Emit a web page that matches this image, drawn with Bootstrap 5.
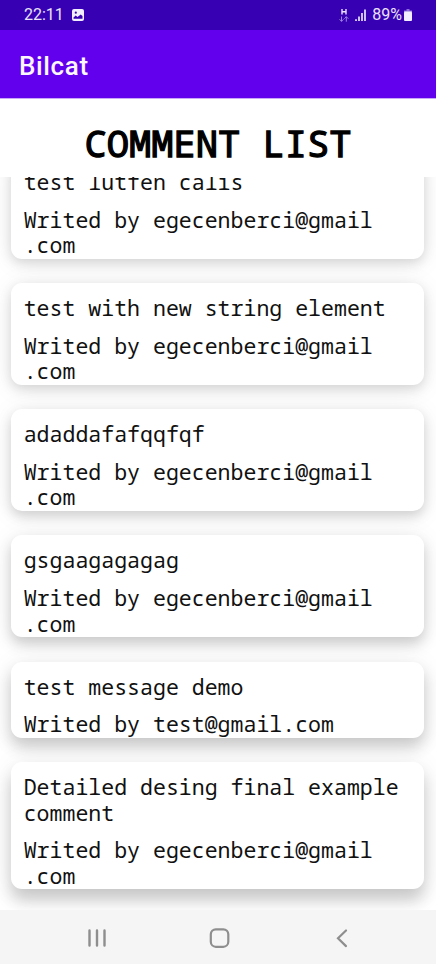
<!DOCTYPE html>
<html lang="en">
<head>
<meta charset="utf-8">
<meta name="viewport" content="width=device-width, initial-scale=1">
<title>Bilcat</title>
<link href="https://cdn.jsdelivr.net/npm/bootstrap@5.3.0/dist/css/bootstrap.min.css" rel="stylesheet">
<style>
  body { height: 964px; font-family: Roboto, sans-serif; color: #000; }
  .status { height: 30px; background: #3700b3; color: #e9e2fa; font-size: 16px; padding: 0 24px 0 24px; line-height: 28px; }
  .status .charge { margin-left: 2px; }
  .appbar { height: 69px; background: #6200ee; padding: 5px 19px 0; border-bottom: 1px solid #c9a8f7; }
  .appbar h1 { font-size: 26px; font-weight: 500; color: #fbf6ff; letter-spacing: .65px; }
  .mono { font-family: "Droid Sans Mono", "Noto Sans Mono", "DejaVu Sans Mono", monospace; }
  .heading { height: 78px; }
  .heading h2 { font-size: 37.1px; font-weight: 400; -webkit-text-stroke: 1.3px #000; line-height: 44px; padding-top: 22px; }
  .feed { padding: 0 12px 0 11px; }
  .stack { gap: 24.2px; margin-top: -19.8px; }
  .note { border: 0; border-radius: 11px; padding: 12px 11px 1.6px 12.7px; font-size: 21.55px; line-height: 25.2px; color: #111; }
  .note p + p { margin-top: 12.7px; }
  .note p { margin-bottom: 0; }
  .lift-1 { box-shadow: 0 4px 12px rgba(0,0,0,.13), 0 3px 26px rgba(0,0,0,.08); }
  .lift-2 { box-shadow: 0 5px 12px rgba(0,0,0,.15), 0 3px 26px rgba(0,0,0,.08); }
  .lift-3 { box-shadow: 0 7px 13px rgba(0,0,0,.17), 0 3px 26px rgba(0,0,0,.08); }
  .lift-4 { box-shadow: 0 9px 15px rgba(0,0,0,.18), 0 3px 26px rgba(0,0,0,.08); }
  .lift-5 { box-shadow: 0 12px 16px rgba(0,0,0,.18), 0 3px 26px rgba(0,0,0,.08); }
  .softkeys { height: 54px; background: #f5f5f5; }
  .softkeys svg { display: block; }
</style>
</head>
<body class="d-flex flex-column overflow-hidden bg-white">
  <div class="status d-flex align-items-center flex-shrink-0">
    <span>22:11</span>
    <svg class="ms-2" width="12" height="12" viewBox="0 0 12 12"><rect width="12" height="12" rx="2" fill="#f2edff"/><circle cx="3.8" cy="3.7" r="1.1" fill="#3700b3"/><path d="M1.500 9.800V8.500l2.200-2 1.800 1.600 3.200-2.600 1.800 1.500v2.800z" fill="#3700b3"/></svg>
    <svg class="ms-auto" width="10" height="13" viewBox="0 0 10 13" fill="none"><path d="M3 0v5.500M7 0v5.500M3 2.700H7" stroke="#e9e2fa" stroke-width="1.400"/><path d="M2.500 7.500v5M.5 10.300l2 2 2-2M7.300 12.700V7.700M5.300 9.700l2-2 2 2" stroke="#9d80e0" stroke-width="1"/></svg>
    <svg class="ms-1 me-1" width="15" height="12" viewBox="0 0 15 12" stroke="#e9e2fa" stroke-width="1.700"><path d="M3 12V10.300M6 12V7.500M9 12V4M12 12V.5"/></svg>
    <span>89%</span>
    <svg class="charge" width="8" height="12" viewBox="0 0 8 12"><path d="M2.500 0h3v1.500H8V3H0V1.500h2.500z" fill="#8f6edb"/><rect y="2.500" width="8" height="9.500" rx="1" fill="#f2edff"/></svg>
  </div>
  <nav class="appbar d-flex align-items-center flex-shrink-0"><h1 class="mb-0">Bilcat</h1></nav>
  <header class="heading text-center flex-shrink-0"><h2 class="mono mb-0">COMMENT LIST</h2></header>
  <main class="feed flex-grow-1 overflow-hidden">
    <div class="stack d-flex flex-column mono">
      <article class="card note lift-1"><p>test lutfen calis</p><p>Writed by egecenberci@gmail<br>.com</p></article>
      <article class="card note lift-1"><p>test with new string element</p><p>Writed by egecenberci@gmail<br>.com</p></article>
      <article class="card note lift-2"><p>adaddafafqqfqf</p><p>Writed by egecenberci@gmail<br>.com</p></article>
      <article class="card note lift-3"><p>gsgaagagagag</p><p>Writed by egecenberci@gmail<br>.com</p></article>
      <article class="card note lift-4"><p>test message demo</p><p>Writed by test@gmail.com</p></article>
      <article class="card note lift-5"><p>Detailed desing final example<br>comment</p><p>Writed by egecenberci@gmail<br>.com</p></article>
    </div>
  </main>
  <footer class="softkeys d-flex align-items-center flex-shrink-0">
    <svg width="436" height="54" viewBox="0 0 436 54" fill="none" stroke="#8e8e8e" stroke-linecap="round"><path d="M89.500 20.500v15M97 20.500v15M104.500 20.500v15" stroke-width="2.400"/><rect x="210.800" y="19.300" width="17.500" height="17.500" rx="5" stroke-width="2.200"/><path d="M346 20.500l-8 7.800 8 7.800" stroke-width="2.200"/></svg>
  </footer>
<script src="https://cdn.jsdelivr.net/npm/bootstrap@5.3.0/dist/js/bootstrap.bundle.min.js"></script>
</body>
</html>
